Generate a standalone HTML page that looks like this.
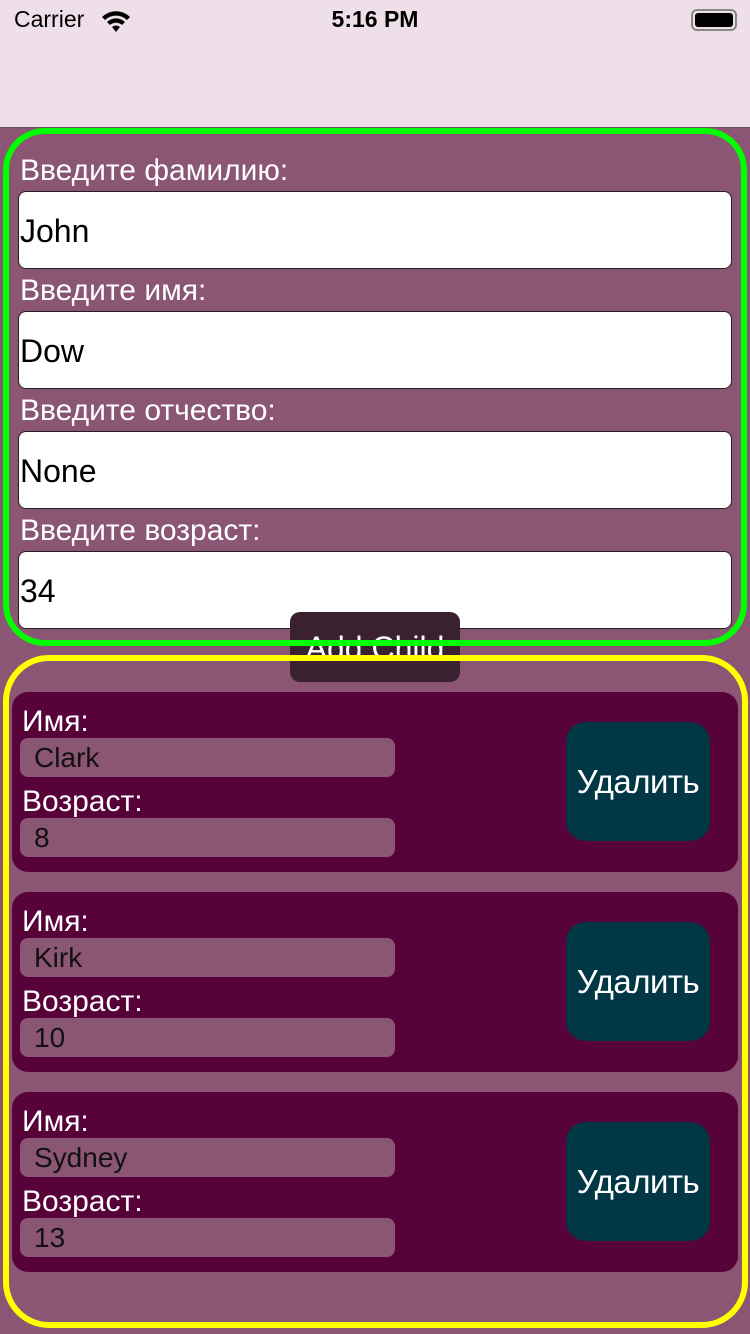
<!DOCTYPE html>
<html><head><meta charset="utf-8"><style>
*{margin:0;padding:0;box-sizing:border-box}
body{width:750px;height:1334px;background:#8b5574;position:relative;overflow:hidden;font-family:"Liberation Sans","DejaVu Sans",sans-serif}
.a{position:absolute}
.hdr{left:0;top:0;width:750px;height:128px;background:#efdfe8;border-bottom:1px solid #6a4a5c}
.lbl{color:#fff;font-size:30px;left:20px}
.tf{left:18px;width:714px;height:78px;background:#fff;border:1px solid #222;border-radius:8px;font-size:32px;color:#000;padding-left:1px;line-height:78px}
.card{left:12px;width:726px;height:180px;background:#57033a;border-radius:16px}
.cl{color:#fff;font-size:30px;left:10px}
.cf{left:8px;width:375px;height:39px;background:#8b5574;border-radius:8px;font-size:28px;color:#111;padding-left:14px;line-height:39px}
.del{left:554px;top:30px;width:144px;height:119px;background:#023846;border-radius:20px;color:#fff;font-size:33px;text-align:center;line-height:119px;letter-spacing:-0.5px}
</style></head><body>
<div class="a hdr"></div>
<div class="a" style="left:14px;top:6px;font-size:23px;color:#000">Carrier</div>
<svg class="a" style="left:100px;top:9px" width="32" height="24" viewBox="0 0 32 24"><path d="M2 8 A20 20 0 0 1 30 8 L27 11 A16 16 0 0 0 5 11Z M7 13 A13 13 0 0 1 25 13 L22 16 A9 9 0 0 0 10 16Z M12 18 A6 6 0 0 1 20 18 L16 23Z" fill="#000"/></svg>
<div class="a" style="left:0;width:750px;top:6px;text-align:center;font-size:23px;font-weight:bold;color:#000">5:16 PM</div>
<div class="a" style="left:691px;top:9px;width:46px;height:22px;border:2px solid #888;border-radius:6px;padding:2px"><div style="width:100%;height:100%;background:#000;border-radius:3px"></div></div>

<div class="a lbl" style="top:154px">Введите фамилию:</div>
<div class="a tf" style="top:191px">John</div>
<div class="a lbl" style="top:274px">Введите имя:</div>
<div class="a tf" style="top:311px">Dow</div>
<div class="a lbl" style="top:394px">Введите отчество:</div>
<div class="a tf" style="top:431px">None</div>
<div class="a lbl" style="top:514px">Введите возраст:</div>
<div class="a tf" style="top:551px">34</div>

<div class="a" style="left:290px;top:612px;width:170px;height:70px;background:#3a2130;border-radius:10px;color:#fff;font-size:32px;text-align:center;line-height:72px">Add Child</div>
<div class="a" style="left:3px;top:128px;width:744px;height:518px;border:6px solid #00ff00;border-radius:42px"></div>

<div class="a card" style="top:692px"><div class="a cl" style="top:13px">Имя:</div><div class="a cf" style="top:46px">Clark</div><div class="a cl" style="top:93px">Возраст:</div><div class="a cf" style="top:126px">8</div><div class="a del">Удалить</div></div>
<div class="a card" style="top:892px"><div class="a cl" style="top:13px">Имя:</div><div class="a cf" style="top:46px">Kirk</div><div class="a cl" style="top:93px">Возраст:</div><div class="a cf" style="top:126px">10</div><div class="a del">Удалить</div></div>
<div class="a card" style="top:1092px"><div class="a cl" style="top:13px">Имя:</div><div class="a cf" style="top:46px">Sydney</div><div class="a cl" style="top:93px">Возраст:</div><div class="a cf" style="top:126px">13</div><div class="a del">Удалить</div></div>

<div class="a" style="left:3px;top:655px;width:745px;height:673px;border:6px solid #ffff00;border-radius:46px"></div>
</body></html>
